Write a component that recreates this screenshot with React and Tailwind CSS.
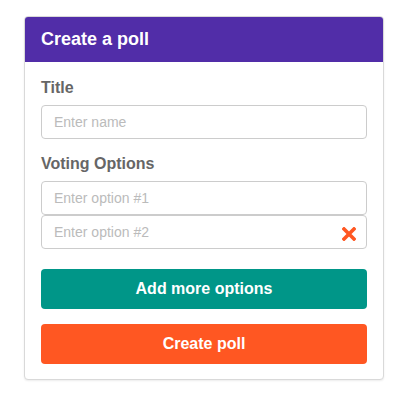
import React from 'react'

export default function App() {
  return (
    <div
      className="min-h-[413px] bg-white pt-4 pl-6"
      style={{ fontFamily: '"Liberation Sans", Arial, sans-serif' }}
    >
      <div className="w-[360px] overflow-hidden rounded border border-[#d9d9d9] bg-white shadow-[0_1px_2px_rgba(0,0,0,0.08)]">
        <div className="flex h-[45px] items-center bg-[#512da8] px-4">
          <h1 className="text-[18px] font-bold text-white">Create a poll</h1>
        </div>
        <div className="px-4 pt-4 pb-[15px]">
          <div className="text-[16px] leading-[20px] font-bold text-[#666]">Title</div>
          <input
            className="mt-[7px] block h-[34px] w-full rounded border border-[#ccc] px-3 text-[14px] text-[#333] outline-none placeholder:text-[#bbb]"
            placeholder="Enter name"
          />
          <div className="mt-[15px] text-[16px] leading-[20px] font-bold text-[#666]">
            Voting Options
          </div>
          <input
            className="mt-[7px] block h-[34px] w-full rounded border border-[#ccc] px-3 text-[14px] text-[#333] outline-none placeholder:text-[#bbb]"
            placeholder="Enter option #1"
          />
          <div className="relative">
            <input
              className="block h-[34px] w-full rounded border border-[#ccc] px-3 pr-8 text-[14px] text-[#333] outline-none placeholder:text-[#bbb]"
              placeholder="Enter option #2"
            />
            <svg
              className="absolute top-[12px] right-[11px]"
              width="14"
              height="14"
              viewBox="0 0 14 14"
            >
              <path
                d="M2 2 L12 12 M12 2 L2 12"
                stroke="#ff5722"
                strokeWidth="3.6"
                strokeLinecap="square"
              />
            </svg>
          </div>
          <button className="mt-[20px] flex h-[40px] w-full items-center justify-center rounded bg-[#009688] text-[16px] font-bold text-white">
            Add more options
          </button>
          <button className="mt-[15px] flex h-[40px] w-full items-center justify-center rounded bg-[#ff5722] text-[16px] font-bold text-white">
            Create poll
          </button>
        </div>
      </div>
    </div>
  )
}
